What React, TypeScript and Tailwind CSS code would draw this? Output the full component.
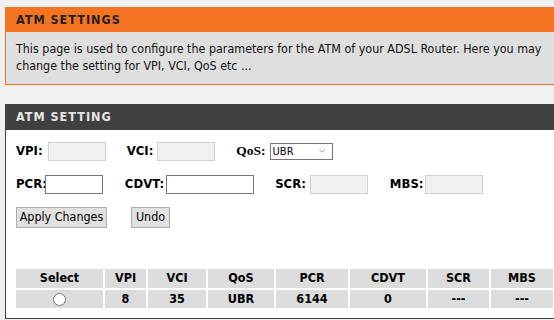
import React from 'react';
import { ChevronDown } from 'lucide-react';

const font = { fontFamily: 'Tahoma, "DejaVu Sans Condensed", "DejaVu Sans", sans-serif' };

type Row = { vpi: string; vci: string; qos: string; pcr: string; cdvt: string; scr: string; mbs: string };

const rows: Row[] = [{ vpi: '8', vci: '35', qos: 'UBR', pcr: '6144', cdvt: '0', scr: '---', mbs: '---' }];

const cols = [
  { label: 'Select', w: 'w-[87px]' },
  { label: 'VPI', w: 'w-[41px]' },
  { label: 'VCI', w: 'w-[58px]' },
  { label: 'QoS', w: 'w-[66px]' },
  { label: 'PCR', w: 'w-[72px]' },
  { label: 'CDVT', w: 'w-[76px]' },
  { label: 'SCR', w: 'w-[61px]' },
  { label: 'MBS', w: 'w-[62px]' },
];

function Field({ label, className, disabled }: { label: string; className: string; disabled?: boolean }) {
  return (
    <div className="flex items-center">
      <span className="text-[13px] font-bold">{label}</span>
      <input
        disabled={disabled}
        className={
          disabled
            ? `h-[19px] border border-[#d0d0d0] bg-[#f0f0f0] ${className}`
            : `h-[19px] border border-[#767676] bg-white ${className}`
        }
      />
    </div>
  );
}

export default function App() {
  return (
    <div
      className="h-[320px] w-[554px] overflow-hidden bg-[#f0f0f0] pl-[5px] pt-[7px] text-[11px] text-[#000]"
      style={font}
    >
      <div className="w-[560px] border border-[#f47321]">
        <div className="flex h-[24px] items-center bg-[#f47321] pl-[10px] text-[12.5px] font-bold tracking-[1px] text-[#222]">
          ATM SETTINGS
        </div>
        <div className="h-[52px] bg-[#dfdfdf] pl-[10px] pt-[8px] text-[12.4px] leading-[17px] text-[#111]">
          This page is used to configure the parameters for the ATM of your ADSL Router. Here you may
          <br />
          change the setting for VPI, VCI, QoS etc ...
        </div>
      </div>

      <div className="mt-[19px] h-[215px] w-[560px] border border-[#404040] bg-white">
        <div className="flex h-[25px] items-center bg-[#404040] pl-[10px] text-[12.5px] font-bold tracking-[1px] text-[#e6e6e6]">
          ATM SETTING
        </div>
        <div className="pl-[10px] text-[12px]">
          <div className="mt-[11px] flex items-center">
            <Field label="VPI:" className="ml-[5px] w-[58px]" disabled />
            <div className="ml-[21px]">
              <Field label="VCI:" className="ml-[4px] w-[58px]" disabled />
            </div>
            <div className="ml-[21px] flex items-center">
              <span className="text-[13.5px] font-bold" style={{ fontFamily: '"Liberation Serif", serif' }}>
                QoS:
              </span>
              <div className="relative ml-[4px]">
                <select className="h-[17px] w-[63px] appearance-none border border-[#767676] bg-white pl-[2px] text-[11px] leading-[15px] outline-none">
                  <option>UBR</option>
                </select>
                <ChevronDown
                  className="pointer-events-none absolute right-[6px] top-[4px] h-[10px] w-[10px] text-[#555]"
                  strokeWidth={1.5}
                />
              </div>
            </div>
          </div>
          <div className="mt-[13px] flex items-center">
            <Field label="PCR:" className="-ml-[2px] w-[58px]" />
            <div className="ml-[22px]">
              <Field label="CDVT:" className="ml-[2px] w-[88px]" />
            </div>
            <div className="ml-[21px]">
              <Field label="SCR:" className="ml-[4px] w-[58px]" disabled />
            </div>
            <div className="ml-[22px]">
              <Field label="MBS:" className="ml-[1px] w-[58px]" disabled />
            </div>
          </div>
          <div className="mt-[13px] flex items-center gap-[24px]">
            <button className="h-[21px] w-[91px] border border-[#adadad] bg-[#e1e1e1] text-[12.4px]">Apply Changes</button>
            <button className="h-[21px] w-[39px] border border-[#adadad] bg-[#e1e1e1] text-[12.4px]">Undo</button>
          </div>

          <table className="-ml-[2px] mt-[39px] border-separate border-spacing-[2px] text-[12.5px] font-bold">
            <thead>
              <tr>
                {cols.map((c) => (
                  <th key={c.label} className={`${c.w} h-[18px] bg-[#dcdcdc] p-0 text-center`}>
                    {c.label}
                  </th>
                ))}
              </tr>
            </thead>
            <tbody>
              {rows.map((r, i) => (
                <tr key={i}>
                  <td className="h-[18px] bg-[#dcdcdc] p-0 text-center">
                    <input type="radio" className="h-[13px] w-[13px] align-middle" />
                  </td>
                  {[r.vpi, r.vci, r.qos, r.pcr, r.cdvt, r.scr, r.mbs].map((v, j) => (
                    <td key={j} className="h-[18px] bg-[#dcdcdc] p-0 text-center">
                      {v}
                    </td>
                  ))}
                </tr>
              ))}
            </tbody>
          </table>
        </div>
      </div>
    </div>
  );
}
